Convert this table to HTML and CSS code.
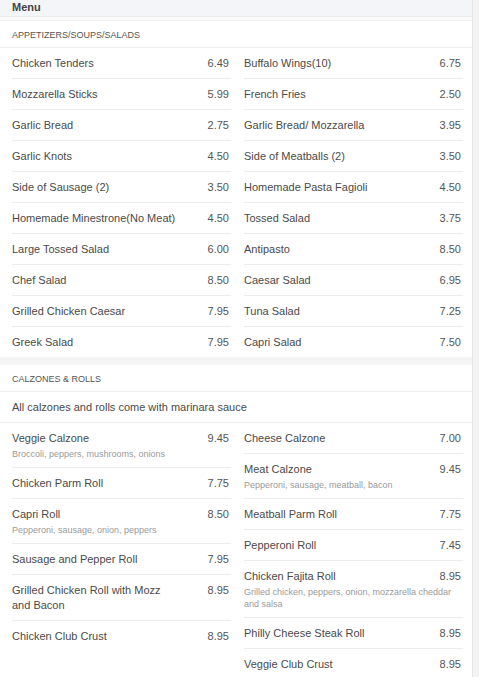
FILE: index.html
```html
<!DOCTYPE html>
<html>
<head>
<meta charset="utf-8">
<link rel="stylesheet" href="styles.css">
</head>
<body>
<div class="card">
  <div class="topbar">Menu</div>
  <div class="spacer"></div>
  <div class="section-title">APPETIZERS/SOUPS/SALADS</div>
  <div class="cols">
    <div class="col">
      <div class="item"><div class="row"><span class="name">Chicken Tenders</span><span class="price">6.49</span></div></div>
      <div class="item"><div class="row"><span class="name">Mozzarella Sticks</span><span class="price">5.99</span></div></div>
      <div class="item"><div class="row"><span class="name">Garlic Bread</span><span class="price">2.75</span></div></div>
      <div class="item"><div class="row"><span class="name">Garlic Knots</span><span class="price">4.50</span></div></div>
      <div class="item"><div class="row"><span class="name">Side of Sausage (2)</span><span class="price">3.50</span></div></div>
      <div class="item"><div class="row"><span class="name">Homemade Minestrone(No Meat)</span><span class="price">4.50</span></div></div>
      <div class="item"><div class="row"><span class="name">Large Tossed Salad</span><span class="price">6.00</span></div></div>
      <div class="item"><div class="row"><span class="name">Chef Salad</span><span class="price">8.50</span></div></div>
      <div class="item"><div class="row"><span class="name">Grilled Chicken Caesar</span><span class="price">7.95</span></div></div>
      <div class="item last"><div class="row"><span class="name">Greek Salad</span><span class="price">7.95</span></div></div>
    </div>
    <div class="col">
      <div class="item"><div class="row"><span class="name">Buffalo Wings(10)</span><span class="price">6.75</span></div></div>
      <div class="item"><div class="row"><span class="name">French Fries</span><span class="price">2.50</span></div></div>
      <div class="item"><div class="row"><span class="name">Garlic Bread/ Mozzarella</span><span class="price">3.95</span></div></div>
      <div class="item"><div class="row"><span class="name">Side of Meatballs (2)</span><span class="price">3.50</span></div></div>
      <div class="item"><div class="row"><span class="name">Homemade Pasta Fagioli</span><span class="price">4.50</span></div></div>
      <div class="item"><div class="row"><span class="name">Tossed Salad</span><span class="price">3.75</span></div></div>
      <div class="item"><div class="row"><span class="name">Antipasto</span><span class="price">8.50</span></div></div>
      <div class="item"><div class="row"><span class="name">Caesar Salad</span><span class="price">6.95</span></div></div>
      <div class="item"><div class="row"><span class="name">Tuna Salad</span><span class="price">7.25</span></div></div>
      <div class="item last"><div class="row"><span class="name">Capri Salad</span><span class="price">7.50</span></div></div>
    </div>
  </div>
  <div class="band"></div>
  <div class="section-title">CALZONES &amp; ROLLS</div>
  <div class="note">All calzones and rolls come with marinara sauce</div>
  <div class="cols">
    <div class="col">
      <div class="item"><div class="row"><span class="name">Veggie Calzone</span><span class="price">9.45</span></div><div class="desc">Broccoli, peppers, mushrooms, onions</div></div>
      <div class="item"><div class="row"><span class="name">Chicken Parm Roll</span><span class="price">7.75</span></div></div>
      <div class="item"><div class="row"><span class="name">Capri Roll</span><span class="price">8.50</span></div><div class="desc">Pepperoni, sausage, onion, peppers</div></div>
      <div class="item"><div class="row"><span class="name">Sausage and Pepper Roll</span><span class="price">7.95</span></div></div>
      <div class="item"><div class="row"><span class="name narrow">Grilled Chicken Roll with Mozz and Bacon</span><span class="price">8.95</span></div></div>
      <div class="item last"><div class="row"><span class="name">Chicken Club Crust</span><span class="price">8.95</span></div></div>
    </div>
    <div class="col">
      <div class="item"><div class="row"><span class="name">Cheese Calzone</span><span class="price">7.00</span></div></div>
      <div class="item"><div class="row"><span class="name">Meat Calzone</span><span class="price">9.45</span></div><div class="desc">Pepperoni, sausage, meatball, bacon</div></div>
      <div class="item"><div class="row"><span class="name">Meatball Parm Roll</span><span class="price">7.75</span></div></div>
      <div class="item"><div class="row"><span class="name">Pepperoni Roll</span><span class="price">7.45</span></div></div>
      <div class="item"><div class="row"><span class="name">Chicken Fajita Roll</span><span class="price">8.95</span></div><div class="desc">Grilled chicken, peppers, onion, mozzarella cheddar and salsa</div></div>
      <div class="item"><div class="row"><span class="name">Philly Cheese Steak Roll</span><span class="price">8.95</span></div></div>
      <div class="item last"><div class="row"><span class="name">Veggie Club Crust</span><span class="price">8.95</span></div></div>
    </div>
  </div>
</div>
</body>
</html>
```

FILE: styles.css
```css
html, body {
  margin: 0;
  padding: 0;
}
body {
  background: #f3f3f4;
  font-family: "Liberation Sans", Arial, sans-serif;
  color: #4a4a4a;
  width: 479px;
  height: 677px;
  overflow: hidden;
}
.card {
  width: 472px;
  background: #fff;
  border-right: 1px solid #e6e6e6;
  min-height: 677px;
}
.topbar {
  height: 17px;
  background: #f4f5f8;
  border-bottom: 1px solid #e9eaee;
  font-size: 11px;
  font-weight: bold;
  color: #444;
  line-height: 13px;
  padding-top: 1px;
  padding-left: 12px;
  box-sizing: border-box;
}
.spacer {
  height: 3px;
  background: #fafafa;
  border-bottom: 1px solid #eeeeee;
}
.section-title {
  height: 25px;
  padding-top: 1px;
  line-height: 26px;
  font-size: 9px;
  color: #555;
  padding-left: 12px;
  border-bottom: 1px solid #eeeeee;
}
.note {
  height: 30px;
  line-height: 31px;
  font-size: 11px;
  color: #4a4a4a;
  padding-left: 12px;
  border-bottom: 1px solid #eeeeee;
}
.band {
  height: 8px;
  background: #f5f5f6;
}
.cols {
  display: grid;
  grid-template-columns: 219px 219px;
  column-gap: 13px;
  padding: 0 9px 0 12px;
}
.item {
  padding: 8px 2px 7px 0;
  border-bottom: 1px solid #ececec;
}
.item.last {
  border-bottom: none;
}
.row {
  display: flex;
  justify-content: space-between;
  align-items: flex-start;
  font-size: 11px;
  line-height: 15px;
  color: #4a4a4a;
}
.name.narrow {
  max-width: 150px;
}
.price {
  color: #555;
}
.desc {
  font-size: 9px;
  line-height: 12px;
  color: #9a9a9a;
  margin-top: 2px;
}
```
